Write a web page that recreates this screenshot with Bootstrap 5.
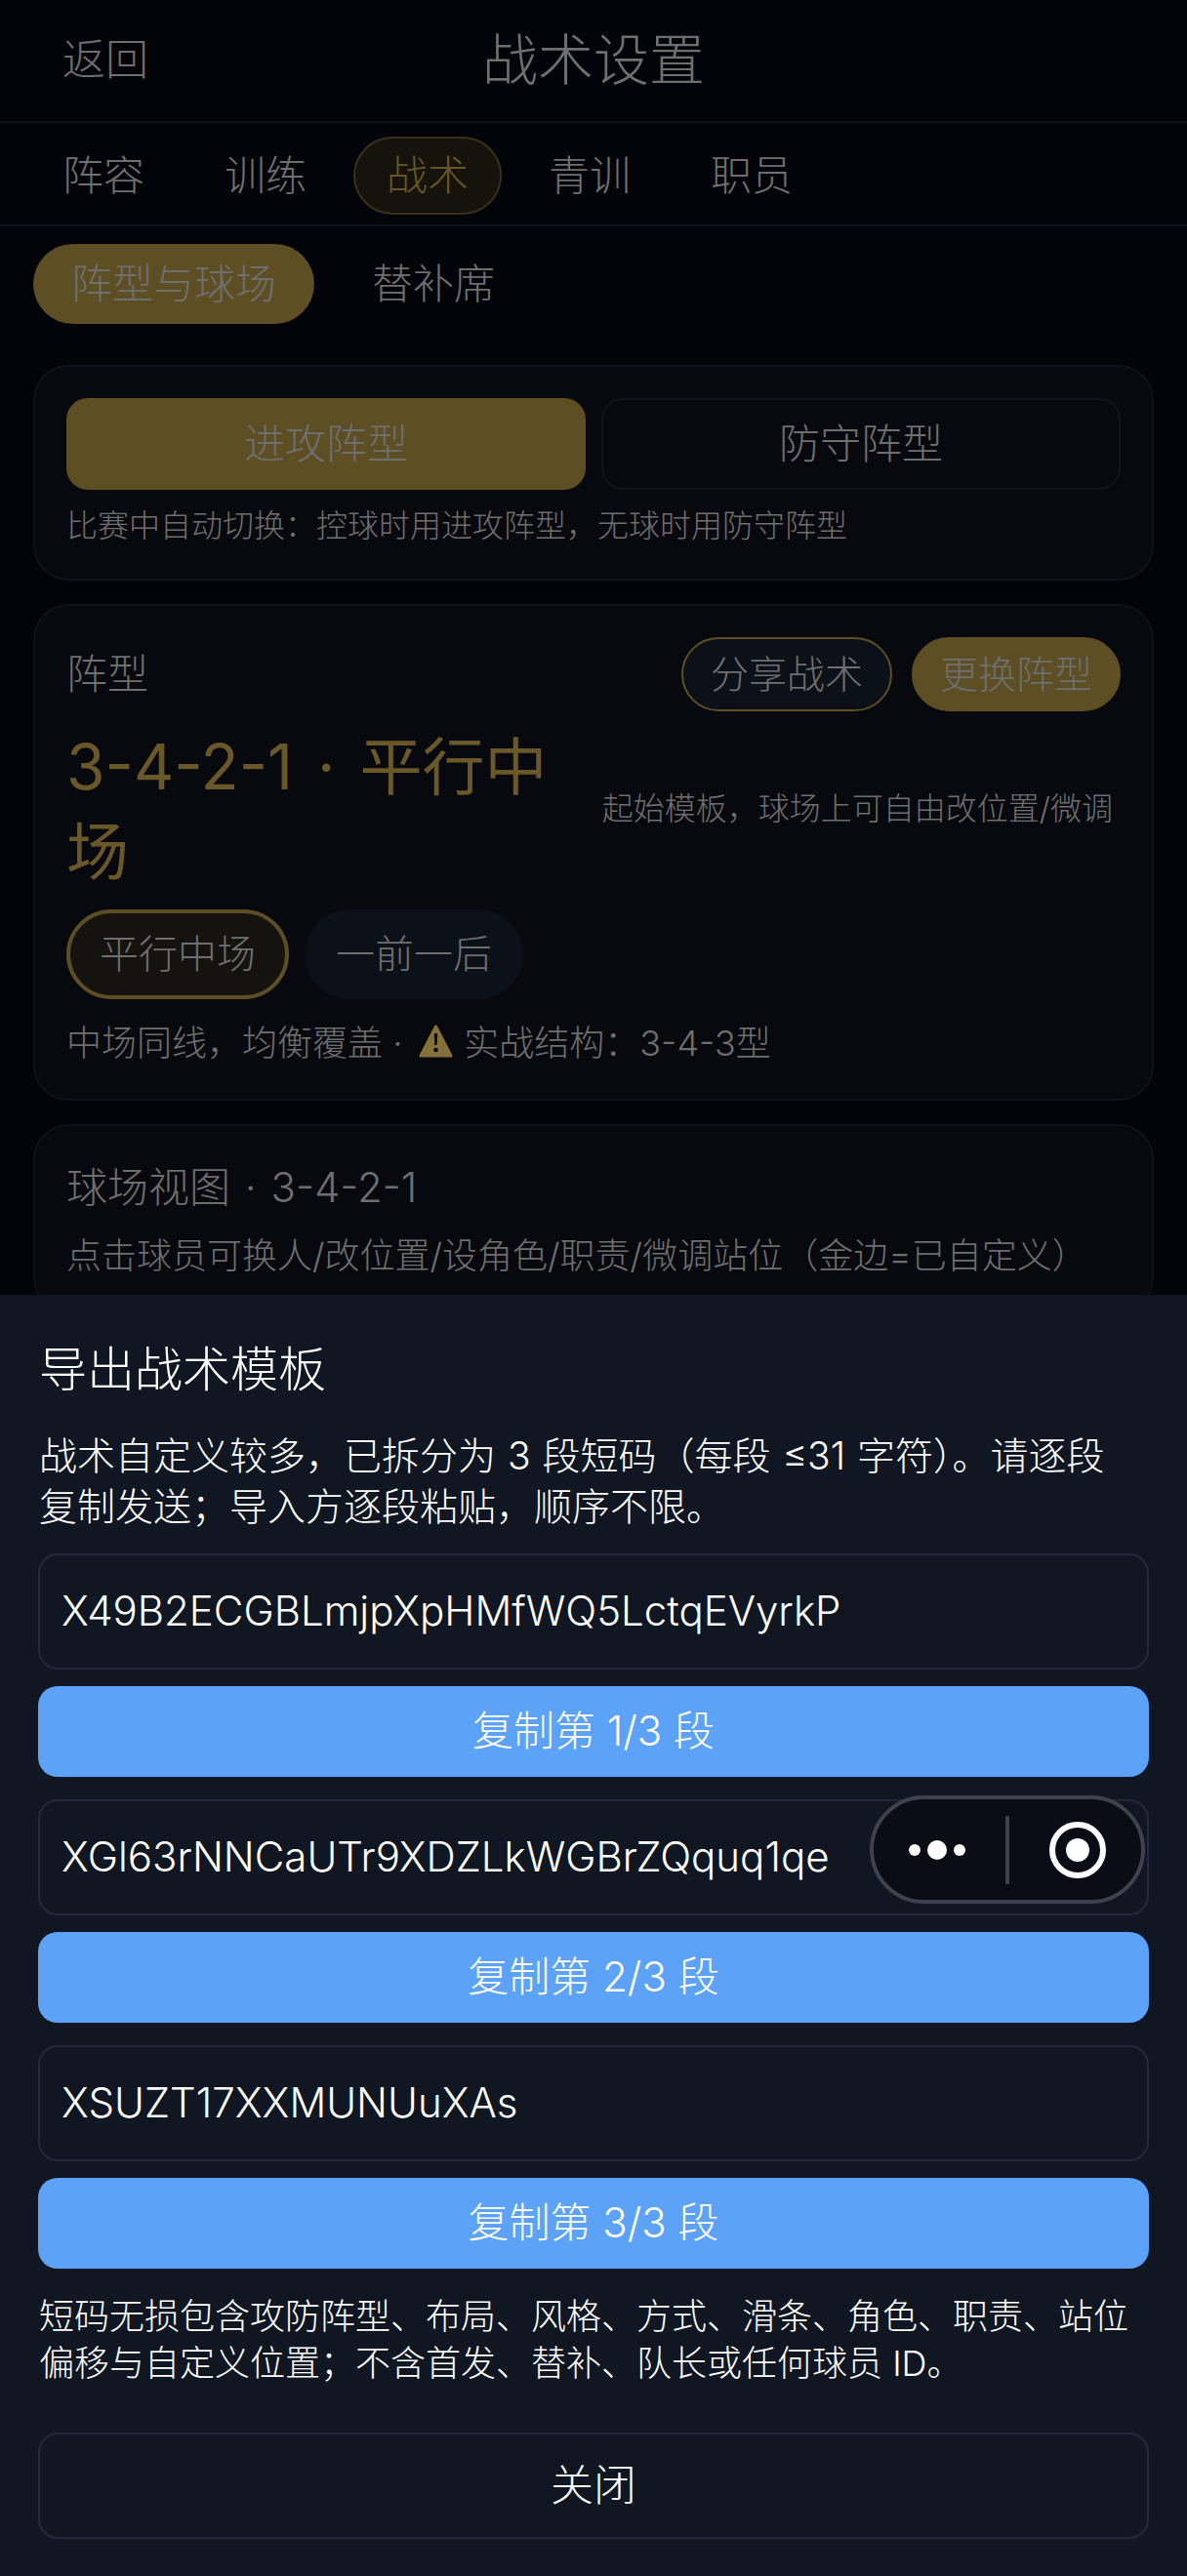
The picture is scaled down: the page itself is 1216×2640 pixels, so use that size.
<!DOCTYPE html>
<html lang="zh-CN">
<head>
<meta charset="utf-8">
<title>战术设置</title>
<link href="https://cdn.jsdelivr.net/npm/bootstrap@5.3.0/dist/css/bootstrap.min.css" rel="stylesheet">
<style>
html,body{height:100%;overflow:hidden;background:#030409;}
body{font-family:Inter,"Noto Sans CJK SC",sans-serif;font-weight:300;color:#6f6f6f;font-size:36px;line-height:1.4;}
.pg-head{height:126px;border-bottom:2px solid #0e1119;padding:0 64px;}
.pg-back{font-size:44px;}
.pg-title{font-size:57px;color:#6f6f6f;}
.tabbar{height:106px;border-bottom:2px solid #0e1119;padding:4px 30px 0;gap:14px;}
.tabitem{height:80px;width:152px;font-size:42px;border:2px solid transparent;border-radius:40px;}
.tabitem.on{color:#665527;background:#15130c;border-color:#39311a;}
.subbar{padding:18px 34px 0;gap:20px;height:142px;}
.subitem{height:82px;padding:0 39px;font-size:42px;border-radius:41px;}
.subitem.on{background:#5d4e23;color:#6f6f6f;}
.panel{margin:0 34px 24px;padding:32px;background:#07090e;border:2px solid #0f121b;border-radius:36px;}
.seg{height:94px;font-size:42px;border-radius:22px;border:2px solid #11141d;}
.seg.on{background:#5d4e23;border-color:#5d4e23;}
.hint{font-size:32px;line-height:44px;margin-top:15px;}
.lbl{font-size:42px;line-height:56px;}
.minibtns{gap:20px;}
.minibtn{height:76px;padding:0 28px;font-size:39px;border-radius:38px;border:2px solid #5d4e23;background:#0c1018;}
.minibtn.fill{padding:0 27px;background:#5d4e23;}
.fname{font-size:64px;line-height:87px;font-weight:400;color:#6b5828;width:510px;margin-top:13px;word-spacing:7px;}
.fnote{font-size:32px;line-height:44px;white-space:nowrap;padding-right:8px;margin-top:12px;}
.chip{height:92px;padding:0 32px;font-size:40px;border-radius:46px;background:#0c1018;}
.chip.on{padding:0 30px;background:#14130f;border:4px solid #5d4e23;}
.infoln{font-size:36px;line-height:48px;margin-top:21px;margin-bottom:1px;}
.warn{width:35px;height:34px;margin:0 11px 0 17px;vertical-align:-2px;}
.view-t{font-size:42px;line-height:56px;margin-top:3px;word-spacing:3px;}
.view-s{font-size:36px;line-height:48px;margin-top:18px;white-space:nowrap;}
.sheet{background:#101722;color:#fff;padding:43px 39px 38px;}
.sheet-t{font-size:49px;line-height:68px;margin-left:1px;}
.sheet-p{font-size:39px;line-height:52px;margin:28px 0 22px 1px;padding-right:20px;word-spacing:1px;}
.codebox{height:119px;padding:0 22px;font-size:42px;border:2px solid #232a3b;border-radius:20px;background:#101722;white-space:nowrap;}
.copybtn{height:93px;margin:17px 0 23px;width:100%;font-size:42px;font-weight:300;background:#5ca3f7;color:#fff;border:0;border-radius:20px;}
.sheet-n{font-size:36px;line-height:48px;margin:25px 0 47px 1px;}
.closebtn{height:109px;width:100%;font-size:44px;font-weight:300;color:#fff;background:transparent;border:2px solid #232a3b;border-radius:20px;}
.capsule{top:1840px;right:43px;width:282px;height:111px;}
.copybtn.lastb{margin-bottom:0;}
</style>
</head>
<body>
<div class="pg-head d-flex align-items-center position-relative">
  <span class="pg-back">返回</span>
  <span class="pg-title position-absolute start-50 translate-middle-x">战术设置</span>
</div>
<div class="tabbar d-flex align-items-center">
  <div class="tabitem d-flex align-items-center justify-content-center">阵容</div>
  <div class="tabitem d-flex align-items-center justify-content-center">训练</div>
  <div class="tabitem on d-flex align-items-center justify-content-center">战术</div>
  <div class="tabitem d-flex align-items-center justify-content-center">青训</div>
  <div class="tabitem d-flex align-items-center justify-content-center">职员</div>
</div>
<div class="subbar d-flex align-items-start">
  <div class="subitem on d-flex align-items-center">阵型与球场</div>
  <div class="subitem d-flex align-items-center">替补席</div>
</div>
<div class="panel">
  <div class="d-flex gap-3">
    <div class="seg on flex-fill d-flex align-items-center justify-content-center">进攻阵型</div>
    <div class="seg flex-fill d-flex align-items-center justify-content-center">防守阵型</div>
  </div>
  <div class="hint">比赛中自动切换：控球时用进攻阵型，无球时用防守阵型</div>
</div>
<div class="panel">
  <div class="d-flex justify-content-between align-items-center">
    <span class="lbl">阵型</span>
    <div class="d-flex minibtns">
      <div class="minibtn d-flex align-items-center">分享战术</div>
      <div class="minibtn fill d-flex align-items-center">更换阵型</div>
    </div>
  </div>
  <div class="d-flex justify-content-between align-items-center">
    <div class="fname">3-4-2-1 · 平行中场</div>
    <div class="fnote">起始模板，球场上可自由改位置/微调</div>
  </div>
  <div class="d-flex gap-3 mt-3">
    <div class="chip on d-flex align-items-center">平行中场</div>
    <div class="chip d-flex align-items-center">一前一后</div>
  </div>
  <div class="infoln">中场同线，均衡覆盖 ·<svg class="warn" viewBox="0 0 35 34"><path d="M17.5 2 33 32H2Z" fill="#85703a" stroke="#85703a" stroke-width="3" stroke-linejoin="round"/><path d="M15.7 10.5a1.8 1.8 0 0 1 3.6 0L18.6 21h-2.2Z" fill="#07090e"/><circle cx="17.5" cy="26" r="2.3" fill="#07090e"/></svg>实战结构：3-4-3型</div>
</div>
<div class="panel mb-0">
  <div class="view-t">球场视图 · 3-4-2-1</div>
  <div class="view-s">点击球员可换人/改位置/设角色/职责/微调站位（金边=已自定义）</div>
</div>

<div class="sheet position-fixed start-0 end-0 bottom-0">
  <div class="sheet-t">导出战术模板</div>
  <div class="sheet-p">战术自定义较多，已拆分为 3 段短码（每段 ≤31 字符）。请逐段复制发送；导入方逐段粘贴，顺序不限。</div>
  <div class="codebox d-flex align-items-center">X49B2ECGBLmjpXpHMfWQ5LctqEVyrkP</div>
  <button class="copybtn d-block" type="button">复制第 1/3 段</button>
  <div class="codebox d-flex align-items-center">XGl63rNNCaUTr9XDZLkWGBrZQquq1qe</div>
  <button class="copybtn d-block" type="button">复制第 2/3 段</button>
  <div class="codebox d-flex align-items-center">XSUZT17XXMUNUuXAs</div>
  <button class="copybtn lastb d-block" type="button">复制第 3/3 段</button>
  <div class="sheet-n">短码无损包含攻防阵型、布局、风格、方式、滑条、角色、职责、站位偏移与自定义位置；不含首发、替补、队长或任何球员 ID。</div>
  <button class="closebtn d-block" type="button">关闭</button>
</div>

<svg class="capsule position-fixed" viewBox="0 0 282 111">
  <rect x="2" y="2" width="278" height="107" rx="53.5" fill="#0a0d15" stroke="#3f424c" stroke-width="4"/>
  <circle cx="46" cy="56" r="6" fill="#fff"/><circle cx="69" cy="56" r="10" fill="#fff"/><circle cx="92" cy="56" r="6" fill="#fff"/>
  <rect x="139" y="21" width="4" height="70" fill="#3f424c"/>
  <circle cx="213" cy="56" r="26" fill="none" stroke="#fff" stroke-width="6"/><circle cx="213" cy="56" r="12" fill="#fff"/>
</svg>
<script src="https://cdn.jsdelivr.net/npm/bootstrap@5.3.0/dist/js/bootstrap.bundle.min.js"></script>
</body>
</html>
